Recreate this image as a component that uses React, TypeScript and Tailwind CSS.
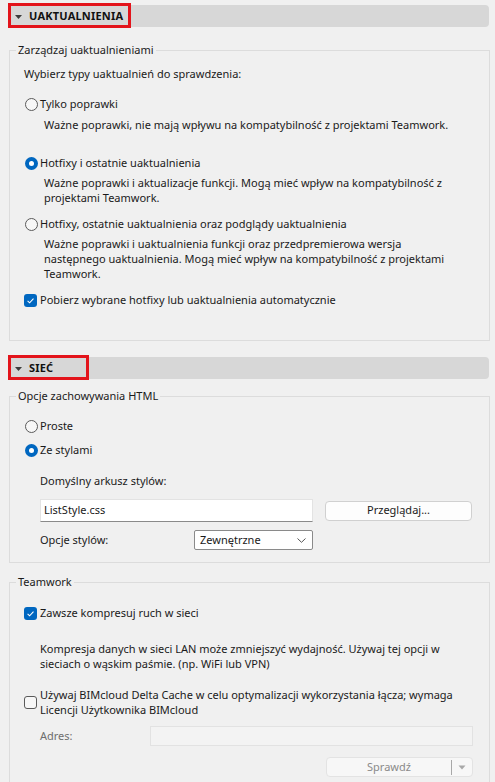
import React from 'react'

const font = { fontFamily: '"Noto Sans", "Open Sans", sans-serif' }

function Radio({ checked }: { checked?: boolean }) {
  if (checked) {
    return (
      <span className="flex h-[13px] w-[13px] shrink-0 items-center justify-center rounded-full bg-[#0067c0]">
        <span className="h-[5px] w-[5px] rounded-full bg-white" />
      </span>
    )
  }
  return <span className="h-[13px] w-[13px] shrink-0 rounded-full border border-[#5a5a5a] bg-[#f7f7f7]" />
}

function Check({ checked }: { checked?: boolean }) {
  if (checked) {
    return (
      <span className="flex h-[13px] w-[13px] shrink-0 items-center justify-center rounded-[3px] bg-[#0067c0]">
        <svg width="13" height="13" viewBox="0 0 13 13">
          <path d="M3.6 6.9 L5.6 8.8 L9.5 4.6" fill="none" stroke="white" strokeWidth="1.1" />
        </svg>
      </span>
    )
  }
  return <span className="h-[13px] w-[13px] shrink-0 rounded-[3px] border border-[#5a5a5a] bg-[#f7f7f7]" />
}

function Header({ title, boxWidth }: { title: string; boxWidth: string }) {
  return (
    <div className="relative ml-[8px] mr-[6px] flex h-[22px] items-center rounded-r-[4px] bg-[#d7d7d7]">
      <svg width="7" height="4" viewBox="0 0 7 4" className="ml-[7px] mt-[1px]">
        <path d="M0 0 L7 0 L3.5 4 Z" fill="#3c3c3c" />
      </svg>
      <span className="ml-[7px] text-[11px] font-bold tracking-[0.2px] text-[#111]">{title}</span>
      <div className={`absolute left-0 top-[-2px] h-[25px] border-[3px] border-[#e3141b] ${boxWidth}`} />
    </div>
  )
}

function Group({ legend, className, children }: { legend: string; className?: string; children: React.ReactNode }) {
  return (
    <fieldset className={`ml-[9px] mr-[5px] border border-[#dcdcdc] ${className ?? ''}`}>
      <legend className="ml-[6px] px-[2px] text-[11px] leading-[16px] text-[#1a1a1a]">{legend}</legend>
      {children}
    </fieldset>
  )
}

export default function App() {
  return (
    <div className="h-[782px] w-[495px] overflow-hidden bg-[#f0f0f0] pt-[5px] text-[11px] text-[#1a1a1a]" style={font}>
      <Header title="UAKTUALNIENIA" boxWidth="w-[123px]" />

      <Group legend="Zarządzaj uaktualnieniami" className="mt-[15px] pb-[32px]">
        <div className="ml-[14px] mt-[8px] h-[16px] leading-[16px]">Wybierz typy uaktualnień do sprawdzenia:</div>

        <div className="ml-[15px] mt-[14px] flex h-[16px] items-center gap-[2px]">
          <Radio />
          <span>Tylko poprawki</span>
        </div>
        <p className="ml-[34px] mt-[5px] leading-[15px]">
          Ważne poprawki, nie mają wpływu na kompatybilność z projektami Teamwork.
        </p>

        <div className="ml-[15px] mt-[23px] flex h-[16px] items-center gap-[2px]">
          <Radio checked />
          <span>Hotfixy i ostatnie uaktualnienia</span>
        </div>
        <p className="ml-[34px] mt-[4px] leading-[15px]">
          Ważne poprawki i aktualizacje funkcji. Mogą mieć wpływ na kompatybilność z<br />
          projektami Teamwork.
        </p>

        <div className="ml-[15px] mt-[11px] flex h-[16px] items-center gap-[2px]">
          <Radio />
          <span>Hotfixy, ostatnie uaktualnienia oraz podglądy uaktualnienia</span>
        </div>
        <p className="ml-[34px] mt-[4px] leading-[15px]">
          Ważne poprawki i uaktualnienia funkcji oraz przedpremierowa wersja<br />
          następnego uaktualnienia. Mogą mieć wpływ na kompatybilność z projektami<br />
          Teamwork.
        </p>

        <div className="ml-[14px] mt-[11px] flex h-[16px] items-center gap-[3px]">
          <Check checked />
          <span>Pobierz wybrane hotfixy lub uaktualnienia automatycznie</span>
        </div>
      </Group>

      <div className="mt-[16px]">
        <Header title="SIEĆ" boxWidth="w-[81px]" />
      </div>

      <Group legend="Opcje zachowywania HTML" className="mt-[9px] pb-[12px]">
        <div className="ml-[15px] mt-[14px] flex h-[16px] items-center gap-[2px]">
          <Radio />
          <span>Proste</span>
        </div>
        <div className="ml-[15px] mt-[8px] flex h-[16px] items-center gap-[2px]">
          <Radio checked />
          <span>Ze stylami</span>
        </div>
        <div className="ml-[30px] mt-[15px] h-[16px] leading-[16px]">Domyślny arkusz stylów:</div>
        <div className="ml-[30px] mt-[10px] flex h-[23px] items-center">
          <div className="flex h-[23px] w-[273px] items-center border border-[#e3e3e3] border-b-[#8a8a8a] bg-white px-[3px]">
            ListStyle.css
          </div>
          <button className="ml-[12px] flex h-[20px] w-[147px] items-center justify-center rounded-[4px] border border-[#d0d0d0] bg-[#fdfdfd] text-[11px] text-[#1a1a1a]">
            Przeglądaj...
          </button>
        </div>
        <div className="ml-[30px] mt-[8px] flex h-[20px] items-center">
          <span className="w-[154px]">Opcje stylów:</span>
          <div className="flex h-[20px] w-[119px] items-center justify-between rounded-[2px] border border-[#8a8a8a] bg-white pl-[5px] pr-[6px]">
            <span>Zewnętrzne</span>
            <svg width="9" height="5" viewBox="0 0 9 5">
              <path d="M0.5 0.5 L4.5 4.3 L8.5 0.5" fill="none" stroke="#555" strokeWidth="1" />
            </svg>
          </div>
        </div>
      </Group>

      <Group legend="Teamwork" className="mt-[11px] pb-[40px]">
        <div className="ml-[14px] mt-[15px] flex h-[16px] items-center gap-[3px]">
          <Check checked />
          <span>Zawsze kompresuj ruch w sieci</span>
        </div>
        <p className="ml-[30px] mt-[20px] leading-[15px]">
          Kompresja danych w sieci LAN może zmniejszyć wydajność. Używaj tej opcji w<br />
          sieciach o wąskim paśmie. (np. WiFi lub VPN)
        </p>
        <div className="ml-[14px] mt-[16px] flex items-center gap-[3px]">
          <Check />
          <span className="leading-[15px]">
            Używaj BIMcloud Delta Cache w celu optymalizacji wykorzystania łącza; wymaga<br />
            Licencji Użytkownika BIMcloud
          </span>
        </div>
        <div className="ml-[30px] mt-[9px] flex h-[20px] items-center">
          <span className="w-[110px] text-[#6e6e6e]">Adres:</span>
          <div className="h-[20px] w-[323px] border border-[#e2e2e2] bg-[#f3f3f3]" />
        </div>
        <div className="ml-[316px] mt-[11px] flex h-[20px] w-[147px] items-center rounded-[4px] border border-[#e3e3e3] bg-[#f7f7f7] text-[#8a8a8a]">
          <span className="flex-1 text-center">Sprawdź</span>
          <span className="h-[15px] w-px bg-[#a8a8a8]" />
          <svg width="20" height="5" viewBox="0 0 20 5">
            <path d="M6.5 0.5 L13.5 0.5 L10 4.5 Z" fill="#a8a8a8" />
          </svg>
        </div>
      </Group>
    </div>
  )
}
